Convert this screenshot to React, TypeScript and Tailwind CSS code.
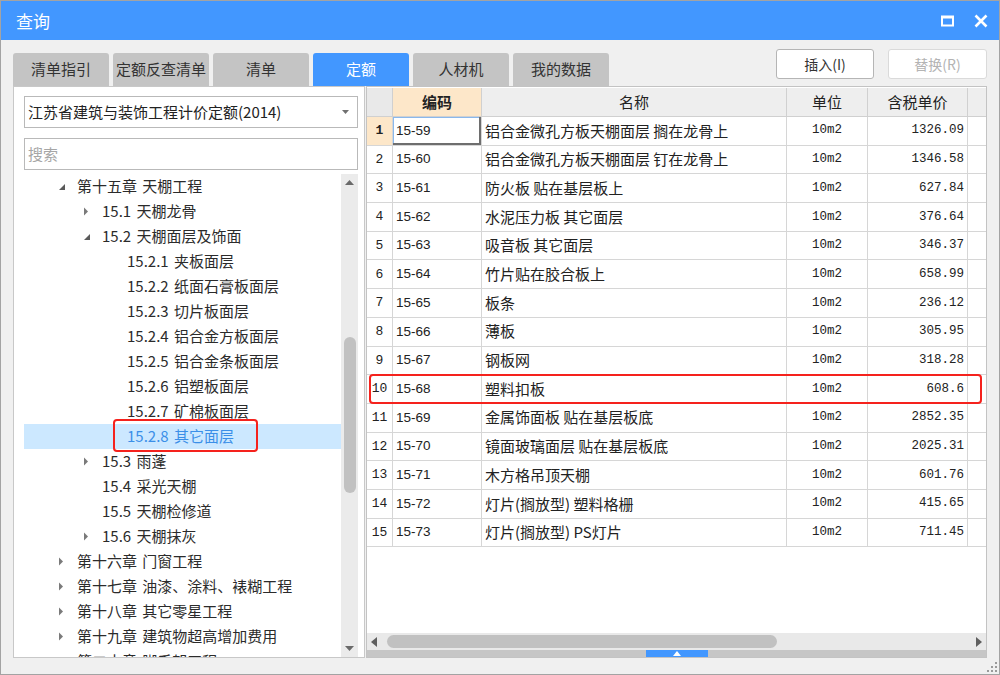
import React from 'react';

const cjk = '"Noto Sans CJK SC", "Noto Sans", sans-serif';

interface TreeNode {
  label: string;
  level: number;
  toggle: 'open' | 'closed' | 'none';
  selected?: boolean;
}

const tree: TreeNode[] = [
  { label: '第十五章 天棚工程', level: 0, toggle: 'open' },
  { label: '15.1 天棚龙骨', level: 1, toggle: 'closed' },
  { label: '15.2 天棚面层及饰面', level: 1, toggle: 'open' },
  { label: '15.2.1 夹板面层', level: 2, toggle: 'none' },
  { label: '15.2.2 纸面石膏板面层', level: 2, toggle: 'none' },
  { label: '15.2.3 切片板面层', level: 2, toggle: 'none' },
  { label: '15.2.4 铝合金方板面层', level: 2, toggle: 'none' },
  { label: '15.2.5 铝合金条板面层', level: 2, toggle: 'none' },
  { label: '15.2.6 铝塑板面层', level: 2, toggle: 'none' },
  { label: '15.2.7 矿棉板面层', level: 2, toggle: 'none' },
  { label: '15.2.8 其它面层', level: 2, toggle: 'none', selected: true },
  { label: '15.3 雨蓬', level: 1, toggle: 'closed' },
  { label: '15.4 采光天棚', level: 1, toggle: 'none' },
  { label: '15.5 天棚检修道', level: 1, toggle: 'none' },
  { label: '15.6 天棚抹灰', level: 1, toggle: 'closed' },
  { label: '第十六章 门窗工程', level: 0, toggle: 'closed' },
  { label: '第十七章 油漆、涂料、裱糊工程', level: 0, toggle: 'closed' },
  { label: '第十八章 其它零星工程', level: 0, toggle: 'closed' },
  { label: '第十九章 建筑物超高增加费用', level: 0, toggle: 'closed' },
  { label: '第二十章 脚手架工程', level: 0, toggle: 'closed' },
];

const rows = [
  ['15-59', '铝合金微孔方板天棚面层 搁在龙骨上', '1326.09'],
  ['15-60', '铝合金微孔方板天棚面层 钉在龙骨上', '1346.58'],
  ['15-61', '防火板 贴在基层板上', '627.84'],
  ['15-62', '水泥压力板 其它面层', '376.64'],
  ['15-63', '吸音板 其它面层', '346.37'],
  ['15-64', '竹片贴在胶合板上', '658.99'],
  ['15-65', '板条', '236.12'],
  ['15-66', '薄板', '305.95'],
  ['15-67', '钢板网', '318.28'],
  ['15-68', '塑料扣板', '608.6'],
  ['15-69', '金属饰面板 贴在基层板底', '2852.35'],
  ['15-70', '镜面玻璃面层 贴在基层板底', '2025.31'],
  ['15-71', '木方格吊顶天棚', '601.76'],
  ['15-72', '灯片(搁放型) 塑料格栅', '415.65'],
  ['15-73', '灯片(搁放型) PS灯片', '711.45'],
];

const tabs = ['清单指引', '定额反查清单', '清单', '定额', '人材机', '我的数据'];

const cols = 'grid grid-cols-[26px_89px_305px_81px_100px_18px]';

function Toggle({ kind }: { kind: TreeNode['toggle'] }) {
  if (kind === 'open') {
    return (
      <svg width="8" height="8" viewBox="0 0 8 8" className="mt-[1px]">
        <path d="M7 1 L7 7 L1 7 Z" fill="#5a5a5a" />
      </svg>
    );
  }
  if (kind === 'closed') {
    return (
      <svg width="6" height="9" viewBox="0 0 6 9">
        <path d="M1 0.5 L5 4.5 L1 8.5 Z" fill="#7a7a7a" />
      </svg>
    );
  }
  return null;
}

export default function App() {
  return (
    <div
      className="w-[1000px] h-[675px] border border-[#a3a3a3] bg-[#f0f0f0] flex flex-col overflow-hidden"
      style={{ fontFamily: cjk }}
    >
      {/* title bar */}
      <div className="h-[39px] shrink-0 bg-[#4297ff] flex items-center pl-[15px] pr-[10px]">
        <span className="text-white text-[17px]">查询</span>
        <div className="ml-auto flex items-center gap-[18px]">
          <svg width="14" height="12" viewBox="0 0 14 12">
            <rect x="1" y="1.5" width="11" height="9" fill="none" stroke="#fff" strokeWidth="2" />
            <rect x="1" y="1" width="11" height="2.5" fill="#fff" />
          </svg>
          <svg width="16" height="16" viewBox="0 0 16 16">
            <path d="M2.5 2.5 L13.5 13.5 M13.5 2.5 L2.5 13.5" stroke="#fff" strokeWidth="2.6" />
          </svg>
        </div>
      </div>

      {/* tabs + buttons */}
      <div className="h-[46px] shrink-0 flex items-end pl-[12px] pr-[12px]">
        <div className="flex gap-[4px]">
          {tabs.map((t) => (
            <div
              key={t}
              className={`w-[96px] h-[33px] rounded-t-[3px] flex items-center justify-center text-[15px] ${
                t === '定额' ? 'bg-[#4297ff] text-white' : 'bg-[#c4c4c4] text-[#333]'
              }`}
            >
              {t}
            </div>
          ))}
        </div>
        <div className="ml-auto self-start mt-[9px] flex gap-[14px]">
          <div className="w-[98px] h-[30px] bg-white border border-[#b5b5b5] rounded-[3px] flex items-center justify-center text-[14px] text-[#333]">
            插入(I)
          </div>
          <div className="w-[99px] h-[30px] bg-white border border-[#dadada] rounded-[3px] flex items-center justify-center text-[14px] text-[#b3b3b3]">
            替换(R)
          </div>
        </div>
      </div>

      {/* panels */}
      <div className="h-[572px] shrink-0 flex pl-[12px]">
        {/* left */}
        <div className="w-[352px] bg-white border border-[#c8c8c8] flex flex-col pt-[9px] pl-[10px] pr-[6px]">
          <div className="h-[32px] border border-[#b9b9b9] flex items-center pl-[3px] pr-[8px] text-[15px] text-[#222]">
            <span>江苏省建筑与装饰工程计价定额(2014)</span>
            <svg width="7" height="4" viewBox="0 0 7 4" className="ml-auto">
              <path d="M0 0 L7 0 L3.5 4 Z" fill="#707070" />
            </svg>
          </div>
          <div className="mt-[10px] h-[32px] border border-[#b9b9b9] flex items-center pl-[3px] text-[15px] text-[#a6a6a6]">
            搜索
          </div>
          <div className="mt-[4px] h-[483px] flex">
            <div className="flex-1 overflow-hidden">
              {tree.map((n) => (
                <div
                  key={n.label}
                  className={`h-[25px] flex items-center text-[15px] [word-spacing:2px] ${
                    n.selected ? 'bg-[#cce8ff] text-[#3b8fe8]' : 'text-[#2b2b2b]'
                  }`}
                  style={{ paddingLeft: 34 + n.level * 25 }}
                >
                  <div className="w-[19px] flex items-center">
                    <Toggle kind={n.toggle} />
                  </div>
                  {n.selected ? (
                    <span className="relative">
                      {n.label}
                      <span className="absolute -left-[14px] -right-[24px] -top-[6px] -bottom-[4px] border-2 border-[#f5221d] rounded-[4px]" />
                    </span>
                  ) : (
                    <span className="whitespace-nowrap">{n.label}</span>
                  )}
                </div>
              ))}
            </div>
            <div className="w-[17px] bg-[#ebebeb] flex flex-col items-center">
              <div className="h-[17px] flex items-center justify-center">
                <svg width="9" height="5" viewBox="0 0 9 5">
                  <path d="M0 5 L9 5 L4.5 0 Z" fill="#6a6a6a" />
                </svg>
              </div>
              <div className="mt-[146px] w-[12px] h-[156px] rounded-full bg-[#c1c1c1]" />
              <div className="flex-1" />
              <div className="h-[17px] flex items-center justify-center">
                <svg width="9" height="5" viewBox="0 0 9 5">
                  <path d="M0 0 L9 0 L4.5 5 Z" fill="#6a6a6a" />
                </svg>
              </div>
            </div>
          </div>
        </div>

        {/* right */}
        <div className="ml-[1px] w-[621px] border border-[#c3c3c3] bg-white flex flex-col">
          <div className={`${cols} h-[29px] mt-[1px] text-[15px] text-[#222]`}>
            <div className="bg-[#e9e9e9] border-r border-b border-[#d0d0d0]" />
            <div className="bg-[#fde7c9] border-r border-b border-[#d0d0d0] flex items-center justify-center font-bold">
              编码
            </div>
            <div className="bg-[#eeeeee] border-r border-b border-[#d0d0d0] flex items-center justify-center">名称</div>
            <div className="bg-[#eeeeee] border-r border-b border-[#d0d0d0] flex items-center justify-center">单位</div>
            <div className="bg-[#eeeeee] border-r border-b border-[#d0d0d0] flex items-center justify-center">含税单价</div>
            <div className="bg-[#eeeeee] border-b border-[#d0d0d0]" />
          </div>
          {rows.map(([code, name, price], i) => (
            <div key={code} className={`${cols} h-[28.7px] relative text-[#222]`}>
              <div
                className={`border-r border-b border-[#d6d6d6] flex items-center justify-center text-[13px] ${
                  i === 0 ? 'bg-[#fde7c9] font-bold' : ''
                }`}
                style={{ fontFamily: '"Liberation Mono", monospace' }}
              >
                {i + 1}
              </div>
              <div
                className={`border-r border-b border-[#d6d6d6] flex items-center pl-[3px] text-[13.5px] ${
                  i === 0 ? 'shadow-[inset_-2px_-2px_0_#6e6e6e,inset_1px_1px_0_#8ab8ec]' : ''
                }`}
                style={{ fontFamily: '"Liberation Sans", sans-serif' }}
              >
                {code}
              </div>
              <div className="border-r border-b border-[#d6d6d6] flex items-center pl-[3px] text-[15px] whitespace-nowrap">
                {name}
              </div>
              <div
                className="border-r border-b border-[#d6d6d6] flex items-center justify-center text-[12.5px]"
                style={{ fontFamily: '"Liberation Mono", monospace' }}
              >
                10m2
              </div>
              <div
                className="border-r border-b border-[#d6d6d6] flex items-center justify-end pr-[3px] text-[12.5px]"
                style={{ fontFamily: '"Liberation Mono", monospace' }}
              >
                {price}
              </div>
              <div className="border-b border-[#d6d6d6]" />
              {i === 9 && (
                <div className="absolute left-[2px] right-[4px] -top-[1px] bottom-0 border-2 border-[#f5221d] rounded-[4px]" />
              )}
            </div>
          ))}
          <div className="flex-1" />
          {/* horizontal scrollbar */}
          <div className="h-[17px] bg-[#e9e9e9] flex items-center px-[4px]">
            <svg width="6" height="10" viewBox="0 0 6 10">
              <path d="M6 0 L6 10 L0 5 Z" fill="#5f5f5f" />
            </svg>
            <div className="ml-[10px] w-[390px] h-[13px] rounded-full bg-[#c1c1c1]" />
            <div className="flex-1" />
            <svg width="6" height="10" viewBox="0 0 6 10">
              <path d="M0 0 L0 10 L6 5 Z" fill="#5f5f5f" />
            </svg>
          </div>
          {/* splitter */}
          <div className="h-[7px] bg-[#c6c6c6] flex justify-center">
            <div className="w-[62px] h-full bg-[#4297ff] flex items-center justify-center">
              <svg width="8" height="5" viewBox="0 0 8 5">
                <path d="M0 5 L8 5 L4 0 Z" fill="#fff" />
              </svg>
            </div>
          </div>
        </div>
      </div>

      {/* bottom strip */}
      <div className="flex-1 flex justify-end items-end pr-[2px] pb-[2px]">
        <svg width="10" height="10" viewBox="0 0 10 10">
          <rect x="8" y="0" width="2" height="2" fill="#9a9a9a" />
          <rect x="4" y="4" width="2" height="2" fill="#9a9a9a" />
          <rect x="8" y="4" width="2" height="2" fill="#9a9a9a" />
          <rect x="0" y="8" width="2" height="2" fill="#9a9a9a" />
          <rect x="4" y="8" width="2" height="2" fill="#9a9a9a" />
          <rect x="8" y="8" width="2" height="2" fill="#9a9a9a" />
        </svg>
      </div>
    </div>
  );
}
